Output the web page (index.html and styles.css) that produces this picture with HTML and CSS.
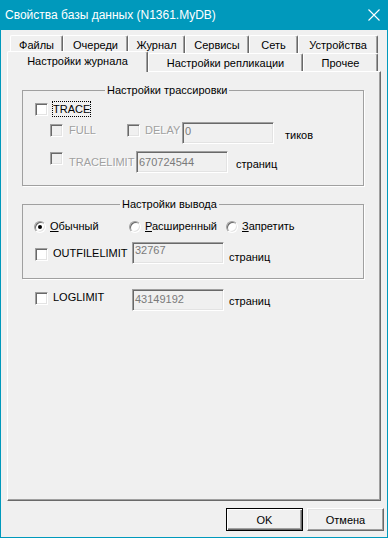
FILE: index.html
```html
<!DOCTYPE html>
<html lang="ru">
<head>
<meta charset="utf-8">
<title>Свойства базы данных</title>
<link rel="stylesheet" href="styles.css">
</head>
<body>
<div class="window">
  <div class="titlebar">
    <span class="title">Свойства базы данных (N1361.MyDB)</span>
    <svg class="close" viewBox="0 0 12 12" width="12" height="12"><path d="M0.5 0.5L11.5 11.5M11.5 0.5L0.5 11.5" stroke="#fff" stroke-width="1.1" fill="none"/></svg>
  </div>

  <div class="tabs">
    <div class="tab-row row-back">
      <div class="tab tab-files">Файлы</div>
      <div class="tab tab-queues">Очереди</div>
      <div class="tab tab-journal">Журнал</div>
      <div class="tab tab-services">Сервисы</div>
      <div class="tab tab-net">Сеть</div>
      <div class="tab tab-devices">Устройства</div>
    </div>
    <div class="tab-row row-front">
      <div class="tab tab-active tab-logset">Настройки журнала</div>
      <div class="tab tab-repl">Настройки репликации</div>
      <div class="tab tab-other">Прочее</div>
    </div>
  </div>

  <div class="panel">
    <fieldset class="group group-trace">
      <legend class="legend-trace">Настройки трассировки</legend>
      <div class="line line-trace">
        <span class="check"></span>
        <span class="focus">TRACE</span>
      </div>
      <div class="line line-full">
        <span class="check check-off cb-full"></span>
        <span class="lbl lbl-off lbl-full">FULL</span>
        <span class="check check-off cb-delay"></span>
        <span class="lbl lbl-off lbl-delay">DELAY</span>
        <div class="field field-delay">0</div>
        <span class="lbl unit-ticks">тиков</span>
      </div>
      <div class="line line-tracelimit">
        <span class="check check-off cb-tracelimit"></span>
        <span class="lbl lbl-off lbl-tracelimit">TRACELIMIT</span>
        <div class="field field-tracelimit">670724544</div>
        <span class="lbl unit-tracelimit">страниц</span>
      </div>
    </fieldset>

    <fieldset class="group group-output">
      <legend class="legend-output">Настройки вывода</legend>
      <div class="line line-radio">
        <div class="radio-item item-normal">
          <span class="radio radio-on"></span>
          <span class="lbl lbl-radio"><u>О</u>бычный</span>
        </div>
        <div class="radio-item item-ext">
          <span class="radio"></span>
          <span class="lbl lbl-radio"><u>Р</u>асширенный</span>
        </div>
        <div class="radio-item">
          <span class="radio"></span>
          <span class="lbl lbl-radio"><u>З</u>апретить</span>
        </div>
      </div>
      <div class="line line-outfile">
        <span class="check cb-outfile"></span>
        <span class="lbl lbl-outfile">OUTFILELIMIT</span>
        <div class="field field-outfile">32767</div>
        <span class="lbl unit-outfile">страниц</span>
      </div>
    </fieldset>

    <div class="line line-log">
      <span class="check cb-log"></span>
      <span class="lbl lbl-log">LOGLIMIT</span>
      <div class="field field-log">43149192</div>
      <span class="lbl unit-log">страниц</span>
    </div>
  </div>

  <div class="buttons">
    <button class="btn btn-default">OK</button>
    <button class="btn">Отмена</button>
  </div>
</div>
</body>
</html>
```

FILE: styles.css
```css
body {
  margin: 0;
  font-family: "Liberation Sans", Arial, sans-serif;
  font-size: 11px;
  color: #000;
}

.window {
  width: 388px;
  height: 538px;
  box-sizing: border-box;
  background: #f0f0f0;
  border: 1px solid #0099bc;
  border-top: 0;
  display: flex;
  flex-direction: column;
}

.titlebar {
  flex: none;
  height: 30px;
  margin: 0 -1px;
  padding: 0 8px 0 5px;
  background: #0099bc;
  color: #fff;
  font-size: 12px;
  display: flex;
  align-items: center;
  justify-content: space-between;
}

.close {
  display: block;
  width: 12px;
  height: 12px;
}

/* ---------- tabs ---------- */
.tabs {
  flex: none;
  margin-top: 5px;
}

.tab-row {
  display: flex;
  align-items: flex-start;
  height: 18px;
}

.row-back { margin-left: 9px; }
.row-front { margin-left: 6px; }

.tab {
  flex: none;
  box-sizing: border-box;
  height: 18px;
  padding-top: 1px;
  line-height: 16px;
  text-align: center;
  white-space: nowrap;
  background: #f0f0f0;
  border-top: 1px solid #fff;
  border-left: 1px solid #fff;
  border-right: 1px solid #696969;
  border-radius: 2px 2px 0 0;
  box-shadow: inset -1px 0 0 #a0a0a0;
}

.tab-active {
  height: 21px;
  margin-top: -2px;
  position: relative;
  z-index: 1;
}

.tab-files { width: 53px; }
.tab-queues { width: 65px; }
.tab-journal { width: 57px; }
.tab-services { width: 64px; }
.tab-net { width: 49px; }
.tab-devices { width: 80px; }
.tab-logset { width: 141px; }
.tab-repl { width: 155px; }
.tab-other { width: 75px; }

/* ---------- panel ---------- */
.panel {
  flex: none;
  box-sizing: border-box;
  width: 374px;
  height: 430px;
  margin-left: 6px;
  padding-left: 14px;
  border-top: 1px solid #fff;
  border-left: 1px solid #fff;
  border-right: 1px solid #696969;
  border-bottom: 1px solid #696969;
  box-shadow: inset -1px -1px 0 #a0a0a0;
}

.group {
  box-sizing: border-box;
  width: 342px;
  min-width: 0;
  margin: 11px 0 0;
  padding: 0 0 12px;
  border: 1px solid #a0a0a0;
  box-shadow: 1px 1px 0 #fff;
}

.group-output { padding-bottom: 14px; }

.group legend {
  padding: 0 2px;
  line-height: 15px;
}

.legend-trace { margin-left: 82px; }
.legend-output { margin-left: 97px; }

.line {
  display: flex;
  align-items: flex-start;
  height: 22px;
}

.lbl {
  flex: none;
  line-height: 14px;
  white-space: nowrap;
}

.lbl-off {
  color: #a0a0a0;
  text-shadow: 1px 1px 0 #fff;
}

.check {
  flex: none;
  box-sizing: border-box;
  width: 13px;
  height: 13px;
  background: #fff;
  border: 1px solid;
  border-color: #a0a0a0 #fff #fff #a0a0a0;
  box-shadow: inset 1px 1px 0 #696969, inset -1px -1px 0 #e3e3e3;
}

.check-off { background: #f0f0f0; }

.field {
  flex: none;
  box-sizing: border-box;
  width: 92px;
  height: 22px;
  padding: 2px 0 0 2px;
  line-height: 14px;
  color: #7a7a7a;
  background: #f0f0f0;
  border: 1px solid;
  border-color: #a0a0a0 #fff #fff #a0a0a0;
  box-shadow: inset 1px 1px 0 #696969, inset -1px -1px 0 #e3e3e3;
}

/* TRACE row */
.line-trace {
  margin-top: 3px;
  height: 16px;
  padding-left: 12px;
  align-items: center;
}

.focus {
  margin-left: 4px;
  line-height: 14px;
  border: 1px dotted #000;
}

/* FULL / DELAY row */
.line-full { margin-top: 5px; }
.cb-full { margin: 2px 0 0 27px; }
.lbl-full { width: 58px; margin: 1px 0 0 6px; }
.cb-delay { margin-top: 2px; }
.lbl-delay { width: 37px; margin: 1px 0 0 5px; }
.field-delay { padding-top: 1px; }
.unit-ticks { margin: 6px 0 0 11px; }

/* TRACELIMIT row */
.line-tracelimit { margin-top: 7px; }
.cb-tracelimit { margin: 1px 0 0 27px; }
.lbl-tracelimit { width: 67px; margin: 4px 0 0 6px; }
.field-tracelimit { padding-top: 3px; }
.unit-tracelimit { margin: 6px 0 0 8px; }

/* radios */
.line-radio {
  margin-top: 6px;
  height: 16px;
  padding-left: 11px;
}

.radio-item {
  display: flex;
  align-items: flex-start;
}

.item-normal { width: 95px; }
.item-ext { width: 97px; }

.radio {
  flex: none;
  box-sizing: border-box;
  width: 12px;
  height: 12px;
  margin-top: 3px;
  border-radius: 50%;
  background: #fff;
  border: 1px solid;
  border-color: #a0a0a0 #fff #fff #a0a0a0;
  box-shadow: inset 1px 1px 0 #696969, inset -1px -1px 0 #e3e3e3;
  display: flex;
  align-items: center;
  justify-content: center;
}

.radio-on::after {
  content: "";
  width: 4px;
  height: 4px;
  border-radius: 50%;
  background: #000;
}

.lbl-radio { margin: 1px 0 0 4px; }

/* OUTFILELIMIT row */
.line-outfile {
  margin-top: 8px;
  padding-left: 12px;
}
.cb-outfile { margin-top: 6px; }
.lbl-outfile { width: 79px; margin: 4px 0 0 5px; }
.field-outfile { padding-top: 0; }
.unit-outfile { margin: 8px 0 0 5px; }

/* LOGLIMIT row */
.line-log {
  margin-top: 10px;
  padding-left: 13px;
}
.cb-log { margin-top: 3px; }
.lbl-log { width: 79px; margin: 1px 0 0 5px; }
.field-log { padding-top: 2px; }
.unit-log { margin: 5px 0 0 5px; }

/* ---------- buttons ---------- */
.buttons {
  flex: none;
  display: flex;
  justify-content: flex-end;
  gap: 4px;
  margin-top: 7px;
  padding-right: 3px;
}

.btn {
  box-sizing: border-box;
  width: 77px;
  height: 23px;
  padding: 0;
  font-family: "Liberation Sans", Arial, sans-serif;
  font-size: 11px;
  color: #000;
  background: #f0f0f0;
  border: 1px solid;
  border-color: #fff #696969 #696969 #fff;
  box-shadow: inset -1px -1px 0 #a0a0a0, inset 1px 1px 0 #e3e3e3;
}

.btn-default {
  border-color: #000;
  box-shadow: inset 1px 1px 0 #fff, inset -1px -1px 0 #696969, inset -2px -2px 0 #a0a0a0;
}
```
